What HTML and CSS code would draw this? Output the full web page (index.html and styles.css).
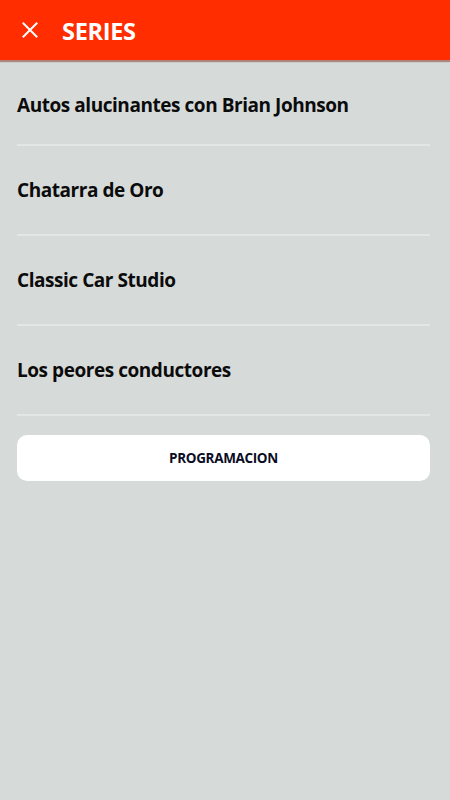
FILE: index.html
```html
<!doctype html>
<html lang="es">
  <head>
    <meta charset="utf-8">
    <meta name="viewport" content="width=device-width, initial-scale=1">
    <title>Series</title>
    <link rel="stylesheet" href="styles.css">
  </head>
  <body>

    <header class="topbar">
      <button class="close" aria-label="Cerrar">
        <svg width="16" height="16" viewBox="0 0 16 16">
          <path d="M1.5 1.5 L14.5 14.5 M14.5 1.5 L1.5 14.5" stroke="#fff" stroke-width="2" stroke-linecap="square"/>
        </svg>
      </button>
      <h1 class="title">SERIES</h1>
    </header>

    <main class="content">
      <ul class="series">
        <li class="series-item">Autos alucinantes con Brian Johnson</li>
        <li class="series-item">Chatarra de Oro</li>
        <li class="series-item">Classic Car Studio</li>
        <li class="series-item">Los peores conductores</li>
      </ul>

      <!-- Link to schedule -->
      <a class="schedule" href="#">PROGRAMACION</a>
    </main>

  </body>
</html>
```

FILE: styles.css
```css
* {
  box-sizing: border-box;
}

body {
  font-family: 'Open Sans', 'Noto Sans', sans-serif;
  margin: 0;
  padding: 0;
  background: #d6dad9;
  color: #0b0b0b;
  min-height: 800px;
}

/* Red top bar */
.topbar {
  height: 60px;
  background: #ff2d00;
  display: flex;
  align-items: center;
  padding-left: 22px;
  gap: 24px;
  box-shadow: 0 2px 1px rgba(120, 30, 10, 0.45);
}
.close {
  border: 0;
  background: none;
  padding: 0;
  width: 16px;
  height: 16px;
  display: flex;
}
.title {
  margin: 0;
  color: #fff;
  font-size: 23.5px;
  font-weight: 700;
  letter-spacing: -0.3px;
  padding-top: 1px;
}

/* Series list */
.content {
  padding: 0 20px 0 17px;
}
.series {
  list-style: none;
  margin: 0;
  padding: 0;
}
.series-item {
  height: 90px;
  display: flex;
  align-items: center;
  font-size: 19px;
  font-weight: 700;
  letter-spacing: -0.45px;
  border-bottom: 2px solid #e4e6e5;
  padding-bottom: 1px;
}
.series-item:first-child {
  height: 86px;
  padding-top: 6px;
  padding-bottom: 0;
}

/* Button */
.schedule {
  display: flex;
  align-items: center;
  justify-content: center;
  height: 46px;
  margin-top: 19px;
  background: #fff;
  border-radius: 10px;
  color: #0b0d24;
  text-decoration: none;
  font-size: 13.5px;
  font-weight: 700;
  letter-spacing: -0.35px;
}
```
